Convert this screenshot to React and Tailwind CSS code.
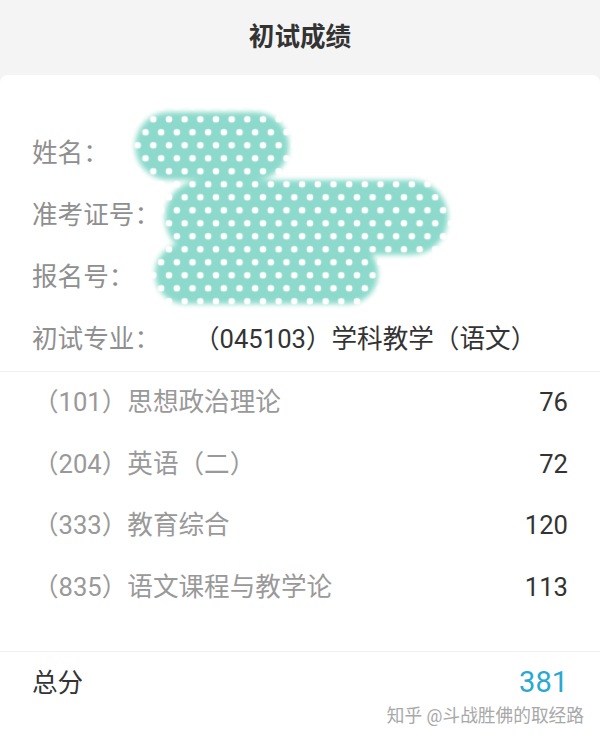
const fontStack = 'Roboto, "Noto Sans CJK SC", sans-serif'

const infoRows = [
  { label: '姓名：', value: '' },
  { label: '准考证号：', value: '' },
  { label: '报名号：', value: '' },
  { label: '初试专业：', value: '（045103）学科教学（语文）' },
]

const scores = [
  { name: '（101）思想政治理论', score: 76 },
  { name: '（204）英语（二）', score: 72 },
  { name: '（333）教育综合', score: 120 },
  { name: '（835）语文课程与教学论', score: 113 },
]

// 打码的圆点涂抹
function DotMask() {
  return (
    <svg className="absolute left-0 top-0" width="600" height="340" viewBox="0 0 600 340">
      <defs>
        <pattern id="dots" patternUnits="userSpaceOnUse" x="145.5" y="119.3" width="31.33" height="26">
          <rect width="31.33" height="26" fill="#8ddacc" />
          <circle cx="7.8" cy="0" r="3.3" fill="#fff" />
          <circle cx="7.8" cy="26" r="3.3" fill="#fff" />
          <circle cx="0" cy="13" r="3.3" fill="#fff" />
          <circle cx="31.33" cy="13" r="3.3" fill="#fff" />
          <circle cx="15.67" cy="13" r="3.3" fill="#fff" />
          <circle cx="23.5" cy="0" r="3.3" fill="#fff" />
          <circle cx="23.5" cy="26" r="3.3" fill="#fff" />
        </pattern>
        <filter id="soft" x="-10%" y="-10%" width="120%" height="120%">
          <feGaussianBlur stdDeviation="2.5" />
        </filter>
        <mask id="blob">
          <g fill="#fff" filter="url(#soft)">
            <rect x="135" y="112" width="154" height="68" rx="34" />
            <rect x="165" y="180" width="283" height="75" rx="37" />
            <rect x="155" y="243" width="223" height="61" rx="30" />
          </g>
        </mask>
      </defs>
      <rect width="600" height="340" fill="url(#dots)" mask="url(#blob)" />
    </svg>
  )
}

export default function App() {
  return (
    <div className="relative h-[740px] w-[600px] overflow-hidden bg-[#f4f4f4]" style={{ fontFamily: fontStack }}>
      <div className="flex h-[75px] items-center justify-center text-[25.6px] font-bold text-[#333333]">
        初试成绩
      </div>

      <div className="h-[665px] rounded-t-[8px] bg-white pt-[47px]">
        {/* 个人信息 */}
        <div className="border-b border-[#f0f0f0] pb-px">
          {infoRows.map((row) => (
            <div key={row.label} className="flex h-[62px] items-center pt-[1px] pl-[32px] text-[25.6px] text-[#8f8f8f]">
              <span className="w-[162px]">{row.label}</span>
              {row.value && <span className="text-[#333333]">{row.value}</span>}
            </div>
          ))}
        </div>

        {/* 各科成绩 */}
        <div className="border-b border-[#f0f0f0] pb-[33px]">
          {scores.map((item) => (
            <div key={item.name} className="flex h-[61.5px] items-center justify-between pb-[1px] pl-[33px] pr-[32px] text-[25.6px]">
              <span className="text-[#999999]">{item.name}</span>
              <span className="text-[#333333]">{item.score}</span>
            </div>
          ))}
        </div>

        <div className="flex h-[60px] items-center justify-between pt-[2px] pl-[32px] pr-[32px] text-[25.6px]">
          <span className="text-[#333333]">总分</span>
          <span className="text-[29px] text-[#29a9d0]">381</span>
        </div>
      </div>

      <DotMask />

      <div className="absolute right-[16px] top-[703px] text-[17.7px] text-[#a8a8a8] [text-shadow:0_0_2px_#fff]">
        知乎 @斗战胜佛的取经路
      </div>
    </div>
  )
}
